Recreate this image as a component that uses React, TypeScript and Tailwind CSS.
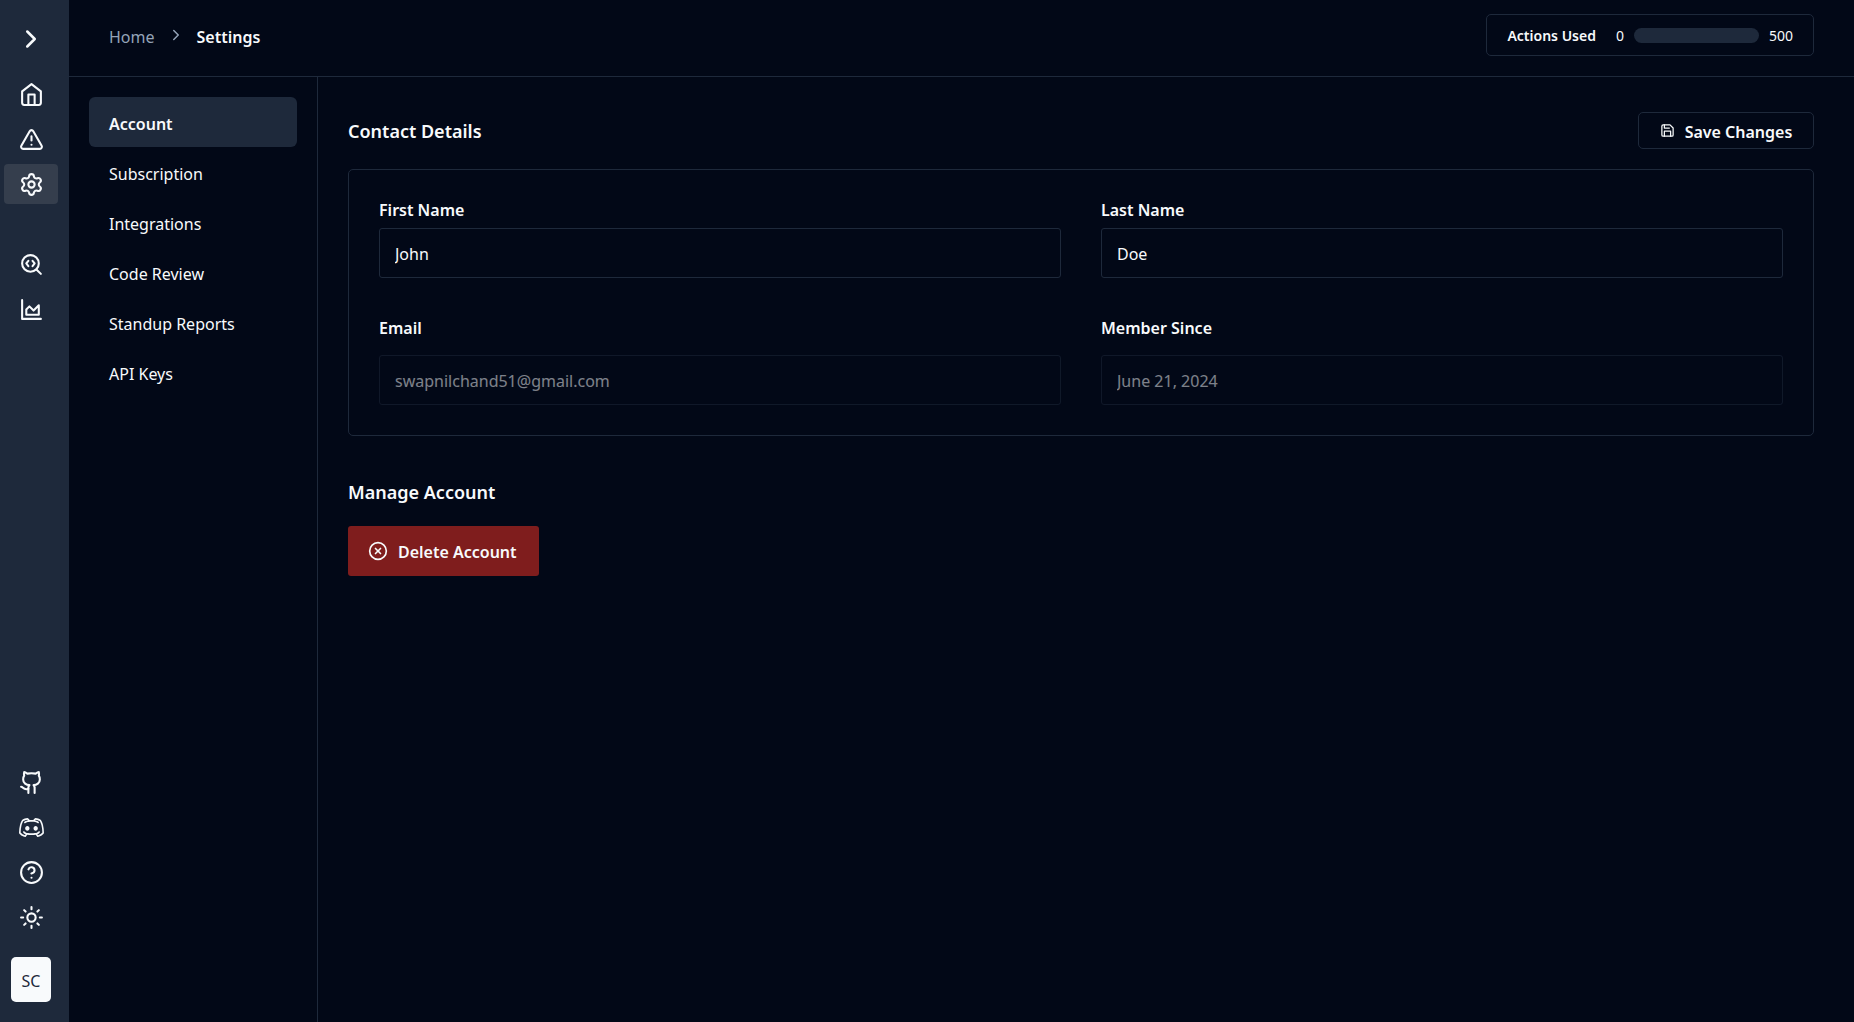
import type { ReactNode } from "react";
import { ChevronRight, CircleQuestionMark, CircleX, Github, SearchCode, Settings, Sun, TriangleAlert } from "lucide-react";
import { RxDiscordLogo } from "react-icons/rx";

function Outline({ size, children }: { size: number; children: ReactNode }) {
  return (
    <svg width={size} height={size} viewBox="0 0 24 24" fill="none" stroke="currentColor" strokeWidth={2} strokeLinecap="round" strokeLinejoin="round" aria-hidden="true">
      {children}
    </svg>
  );
}

function HomeIcon() {
  return (
    <Outline size={25}>
      <path d="m3 9 9-7 9 7v11a2 2 0 0 1-2 2H5a2 2 0 0 1-2-2z" />
      <path d="M9 22V12h6v10" />
    </Outline>
  );
}

function AreaIcon() {
  return (
    <Outline size={25}>
      <path d="M3 3v18h18" />
      <path d="M7 12v5h12V8l-5 5-4-4Z" />
    </Outline>
  );
}

function SaveIcon() {
  return (
    <Outline size={15}>
      <path d="M19 21H5a2 2 0 0 1-2-2V5a2 2 0 0 1 2-2h11l5 5v11a2 2 0 0 1-2 2z" />
      <path d="M17 21v-8H7v8" />
      <path d="M7 3v5h8" />
    </Outline>
  );
}

function RailLink({ label, active, children }: { label: string; active?: boolean; children: ReactNode }) {
  return (
    <a href="#" aria-label={label} className={`flex h-10 items-center justify-center rounded ${active ? "bg-[#353e4d]" : ""}`}>
      {children}
    </a>
  );
}

const sections = ["Account", "Subscription", "Integrations", "Code Review", "Standup Reports", "API Keys"];

function Field({ id, label, value, disabled }: { id: string; label: string; value: string; disabled?: boolean }) {
  return (
    <div className={`flex flex-col ${disabled ? "gap-[17px]" : "gap-2"}`}>
      <label htmlFor={id} className="text-base leading-5 font-semibold">{label}</label>
      <input
        id={id}
        defaultValue={value}
        disabled={disabled}
        className="h-[50px] w-full rounded-[3px] border border-[#1e293b] bg-transparent px-[15px] pt-0.5 text-base disabled:opacity-50"
      />
    </div>
  );
}

export default function App() {
  return (
    <div className="flex min-h-screen bg-[#020817] font-['Noto_Sans','Open_Sans',sans-serif] text-base text-slate-50">
      <aside className="flex w-[69px] shrink-0 flex-col bg-[#1e293b] pt-6 pr-[11px] pb-5 pl-1">
        <button aria-label="Expand sidebar" className="flex justify-center">
          <ChevronRight size={30} />
        </button>
        <nav className="mt-5 flex flex-col gap-[5px]">
          <RailLink label="Home"><HomeIcon /></RailLink>
          <RailLink label="Alerts"><TriangleAlert size={25} /></RailLink>
          <RailLink label="Settings" active><Settings size={25} /></RailLink>
        </nav>
        <nav className="mt-10 flex flex-col gap-[5px]">
          <RailLink label="Code search"><SearchCode size={25} /></RailLink>
          <RailLink label="Reports"><AreaIcon /></RailLink>
        </nav>
        <nav className="mt-auto flex flex-col gap-[5px]">
          <RailLink label="GitHub"><Github size={25} /></RailLink>
          <RailLink label="Discord"><RxDiscordLogo size={25} /></RailLink>
          <RailLink label="Help"><CircleQuestionMark size={25} /></RailLink>
          <RailLink label="Theme"><Sun size={25} /></RailLink>
        </nav>
        <button className="mt-5 h-[45px] w-10 self-center rounded-[5px] bg-slate-50 pt-0.5 text-base text-[#1e293b]">SC</button>
      </aside>

      <div className="flex min-w-0 flex-1 flex-col">
        <header className="flex h-[77px] items-start justify-between border-b border-[#1e293b] pt-3.5 pr-10 pl-10">
          <nav aria-label="Breadcrumb" className="flex items-center gap-3 pt-[11px]">
            <a href="#" className="leading-6 text-[#94a3b8]">Home</a>
            <ChevronRight size={18} className="mb-1 text-[#94a3b8]" />
            <span className="leading-6 font-semibold">Settings</span>
          </nav>
          <div className="flex h-[42px] items-center rounded-[5px] border border-[#1e293b] px-5 text-sm">
            <span className="pt-0.5 font-semibold">Actions Used</span>
            <span className="ml-5 pt-0.5">0</span>
            <div role="progressbar" aria-label="Actions used" aria-valuemin={0} aria-valuemax={500} aria-valuenow={0} className="mx-2.5 h-[15px] w-[125px] rounded-full bg-[#1e293b]" />
            <span className="pt-0.5">500</span>
          </div>
        </header>

        <div className="flex flex-1">
          <nav aria-label="Settings sections" className="flex w-[249px] shrink-0 flex-col border-r border-[#1e293b] p-5">
            {sections.map((name, i) => (
              <a key={name} href="#" className={`flex h-[50px] items-center rounded-md px-5 pt-[3px] ${i === 0 ? "bg-[#1e293b] font-semibold" : ""}`}>
                {name}
              </a>
            ))}
          </nav>

          <main className="min-w-0 flex-1 pt-[35px] pr-10 pl-[30px]">
            <div className="flex items-center justify-between">
              <h2 className="text-lg font-semibold">Contact Details</h2>
              <button className="flex h-[37px] w-44 items-center justify-center gap-2.5 rounded-[5px] border border-[#1e293b] font-semibold">
                <SaveIcon />
                <span className="pt-0.5">Save Changes</span>
              </button>
            </div>
            <form className="mt-5 grid grid-cols-2 gap-10 rounded-[5px] border border-[#1e293b] p-[30px]">
              <Field id="first-name" label="First Name" value="John" />
              <Field id="last-name" label="Last Name" value="Doe" />
              <Field id="email" label="Email" value="swapnilchand51@gmail.com" disabled />
              <Field id="member-since" label="Member Since" value="June 21, 2024" disabled />
            </form>
            <h2 className="mt-[42px] text-lg font-semibold">Manage Account</h2>
            <button className="mt-5 flex h-[50px] w-[191px] items-center gap-2.5 rounded-[3px] bg-[#7f1d1d] px-5 font-semibold">
              <CircleX size={20} />
              <span className="pt-0.5">Delete Account</span>
            </button>
          </main>
        </div>
      </div>
    </div>
  );
}
